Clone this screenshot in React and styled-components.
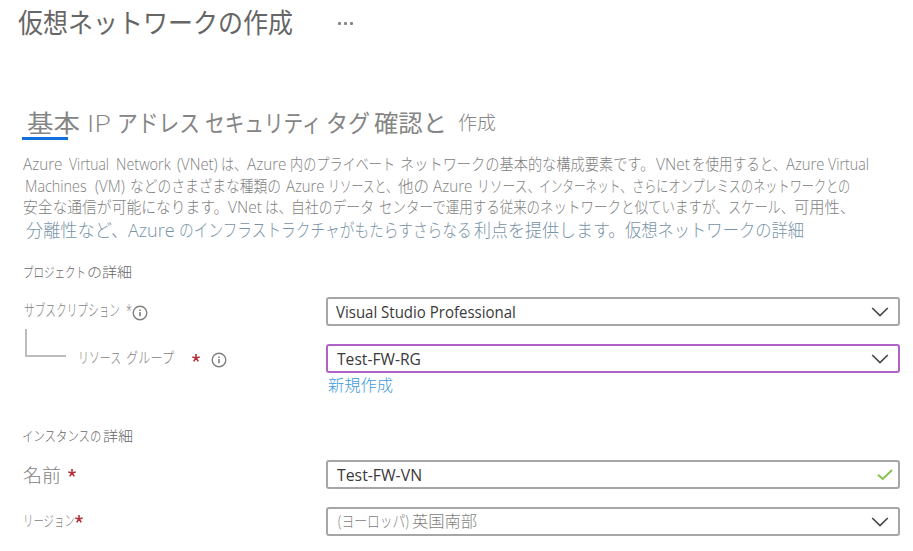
import React, { useLayoutEffect, useRef, useState } from "react";
import styled, { createGlobalStyle } from "styled-components";

const GlobalStyle = createGlobalStyle`
  * { box-sizing: border-box; }
  body {
    margin: 0;
    background: #fff;
    overflow: hidden;
    font-family: "Open Sans", "Noto Sans CJK JP", sans-serif;
  }
`;

const Page = styled.main`
  width: 913px;
  height: 551px;
  display: flex;
  flex-direction: column;
  background: #fff;
`;

const Line = styled.div`
  display: flex;
  align-items: center;
  flex: none;
  height: ${(p) => p.$h}px;
  margin-top: ${(p) => p.$top || 0}px;
  color: ${(p) => p.$color || "#7e7e7e"};
  font-size: ${(p) => p.$size}px;
  font-weight: ${(p) => p.$weight || 300};
  line-height: ${(p) => p.$h}px;
  white-space: nowrap;
`;

const RunBox = styled.span`
  flex: none;
  width: ${(p) => p.$w}px;
  height: 100%;
  margin-left: ${(p) => p.$gap}px;
  font-size: ${(p) => (p.$size ? `${p.$size}px` : "inherit")};
  font-weight: ${(p) => p.$weight || "inherit"};
  color: ${(p) => p.$color || "inherit"};
`;

const RunText = styled.span`
  display: inline-block;
  transform-origin: left center;
  white-space: pre;
  margin-top: ${(p) => -(p.$lift || 0)}px;
`;

/* Condenses or widens a run of text so that it fills its column width. */
function Run({ gap, w, text, size, weight, color, lift }) {
  const ref = useRef(null);
  const [scale, setScale] = useState(1);
  useLayoutEffect(() => {
    setScale(w / ref.current.offsetWidth);
  }, [w, text]);
  return (
    <RunBox $gap={gap} $w={w} $size={size} $weight={weight} $color={color}>
      <RunText ref={ref} $lift={lift} style={{ transform: `scaleX(${scale})` }}>
        {text}
      </RunText>
    </RunBox>
  );
}

/* runs: [start, end, text, options] */
function TextLine({ runs, children, ...line }) {
  let end = 0;
  return (
    <Line {...line}>
      {runs.map(([from, to, text, opts]) => {
        const gap = from - end;
        end = to;
        return <Run key={from} gap={gap} w={to - from} text={text} {...opts} />;
      })}
      {children}
    </Line>
  );
}

const Dots = styled.span`
  display: flex;
  gap: 3px;
  margin-left: 45px;
  i {
    width: 3px;
    height: 3px;
    border-radius: 1px;
    background: #858585;
  }
`;

const Underline = styled.div`
  flex: none;
  width: 46px;
  height: 3px;
  margin-left: 22px;
  background: #1070dc;
`;

const FormRow = styled.div`
  display: flex;
  flex: none;
  height: 29px;
  margin-top: ${(p) => p.$top}px;
`;

const Label = styled.div`
  width: 326px;
  flex: none;
  display: flex;
`;

const Field = styled.div`
  width: 574px;
  height: 29px;
  display: flex;
  align-items: center;
  justify-content: space-between;
  padding: 0 ${(p) => p.$right || 9}px 0 0;
  border: 2px solid ${(p) => (p.$active ? "#b062c6" : "#a6a6a6")};
  border-radius: 3px;
  background: #fff;
`;

const IconWrap = styled.span`
  display: flex;
  flex: none;
  align-self: flex-start;
  margin-left: ${(p) => p.$left || 0}px;
  margin-top: ${(p) => p.$top || 0}px;
`;

const Info = () => (
  <svg width="16" height="16" viewBox="0 0 16 16" fill="none" stroke="#808080">
    <circle cx="8" cy="8" r="6.8" strokeWidth="1.4" />
    <path d="M8 7v4.3M8 4.4v1.5" strokeWidth="1.6" />
  </svg>
);

const Star = () => (
  <svg width="8" height="8" viewBox="0 0 8 8" fill="none" stroke="#b3303a" strokeWidth="1.6">
    <path d="M4 4V0M4 4L.3 3M4 4L7.7 3M4 4L1.7 7.4M4 4L6.3 7.4" />
  </svg>
);

const Chevron = () => (
  <svg width="18" height="10" viewBox="0 0 18 10" fill="none" stroke="#484848" strokeWidth="1.7">
    <path d="M1.2 1L9 8.6L16.8 1" />
  </svg>
);

const Check = () => (
  <svg width="16" height="12" viewBox="0 0 16 12" fill="none" stroke="#84c24e" strokeWidth="1.9">
    <path d="M1 5.7L5.8 10L15 1" />
  </svg>
);

const Branch = styled.span`
  width: 41px;
  height: 28px;
  margin-left: 25px;
  margin-top: -15px;
  border-left: 2px solid #bdbdbd;
  border-bottom: 2px solid #bdbdbd;
`;

const dark = { color: "#3a3a3a", weight: 400, lift: -1 };

export default function App() {
  return (
    <Page>
      <GlobalStyle />
      <TextLine $top={3} $h={40} $size={27} $color="#666" $weight={400} runs={[[18, 293, "仮想ネットワークの作成"]]}>
        <Dots><i /><i /><i /></Dots>
      </TextLine>
      <TextLine
        $top={66} $h={28} $size={24} $color="#858585" $weight={400}
        runs={[
          [27, 80, "基本"], [87, 111, "IP", { weight: 300 }], [117, 200, "アドレス"], [205, 322, "セキュリティ"],
          [326, 370, "タグ"], [374, 447, "確認と"], [458, 496, "作成", { size: 19, weight: 300, lift: 5 }],
        ]}
      />
      <Underline />
      <TextLine
        $top={14} $h={21} $size={16}
        runs={[
          [23, 62, "Azure"], [69, 109, "Virtual"], [116, 171, "Network"], [177, 218, "(VNet)"],
          [221, 247, "は、"], [247, 286, "Azure"], [290, 395, "内のプライベート"],
          [400, 654, "ネットワークの基本的な構成要素です。"], [656, 690, "VNet"], [692, 786, "を使用すると、"],
          [786, 824, "Azure"], [828, 869, "Virtual"],
        ]}
      />
      <TextLine
        $top={1} $h={21} $size={16}
        runs={[
          [25, 87, "Machines"], [95, 125, "(VM)"], [130, 281, "などのさまざまな種類の"], [286, 324, "Azure"],
          [328, 398, "リソースと、"], [398, 429, "他の"], [433, 472, "Azure"], [477, 540, "リソース、"],
          [539, 632, "インターネット、"], [632, 850, "さらにオンプレミスのネットワークとの"],
        ]}
      />
      <TextLine
        $h={20} $size={16}
        runs={[
          [23, 228, "安全な通信が可能になります。"], [228, 262, "VNet"], [265, 292, "は、"], [291, 374, "自社のデータ"],
          [379, 729, "センターで運用する従来のネットワークと似ていますが、"], [728, 794, "スケール、"], [794, 855, "可用性、"],
        ]}
      />
      <TextLine
        $h={27} $size={18} $color="#7893a7"
        runs={[
          [26, 128, "分離性など、"], [128, 175, "Azure"], [179, 472, "のインフラストラクチャがもたらすさらなる"],
          [474, 625, "利点を提供します。"], [625, 804, "仮想ネットワークの詳細"],
        ]}
      />
      <TextLine $top={17} $h={22} $size={14} $color="#666" runs={[[23, 86, "プロジェクト"], [87, 132, "の詳細"]]} />
      <FormRow $top={14}>
        <Label>
          <TextLine $h={26} $size={16} runs={[[24, 120, "サブスクリプション"], [126, 132, "*"]]} />
          <IconWrap $top={8}><Info /></IconWrap>
        </Label>
        <Field>
          <TextLine $h={25} $size={16} runs={[[8, 188, "Visual Studio Professional", dark]]} />
          <Chevron />
        </Field>
      </FormRow>
      <FormRow $top={18}>
        <Label>
          <Branch />
          <TextLine $h={26} $size={15} runs={[[12, 55, "リソース"], [60, 108, "グループ"]]} />
          <IconWrap $left={18} $top={10}><Star /></IconWrap>
          <IconWrap $left={11} $top={8}><Info /></IconWrap>
        </Label>
        <Field $active>
          <TextLine $h={25} $size={16} runs={[[9, 93, "Test-FW-RG", dark]]} />
          <Chevron />
        </Field>
      </FormRow>
      <TextLine $top={1} $h={22} $size={16} $color="#409be0" runs={[[328, 393, "新規作成"]]} />
      <TextLine $top={28} $h={24} $size={14} $color="#666" runs={[[22, 101, "インスタンスの"], [103, 133, "詳細"]]} />
      <FormRow $top={12}>
        <Label>
          <TextLine $h={30} $size={18} runs={[[23, 61, "名前"]]} />
          <IconWrap $left={7} $top={9}><Star /></IconWrap>
        </Label>
        <Field $right={5}>
          <TextLine $h={25} $size={16} runs={[[9, 94, "Test-FW-VN", dark]]} />
          <Check />
        </Field>
      </FormRow>
      <FormRow $top={18}>
        <Label>
          <TextLine $h={26} $size={15} runs={[[23, 75, "リージョン"]]} />
          <IconWrap $top={8}><Star /></IconWrap>
        </Label>
        <Field>
          <TextLine $h={25} $size={16} runs={[[10, 81, "(ヨーロッパ)", { lift: 3 }], [84, 149, "英国南部", { lift: 3 }]]} />
          <Chevron />
        </Field>
      </FormRow>
    </Page>
  );
}
